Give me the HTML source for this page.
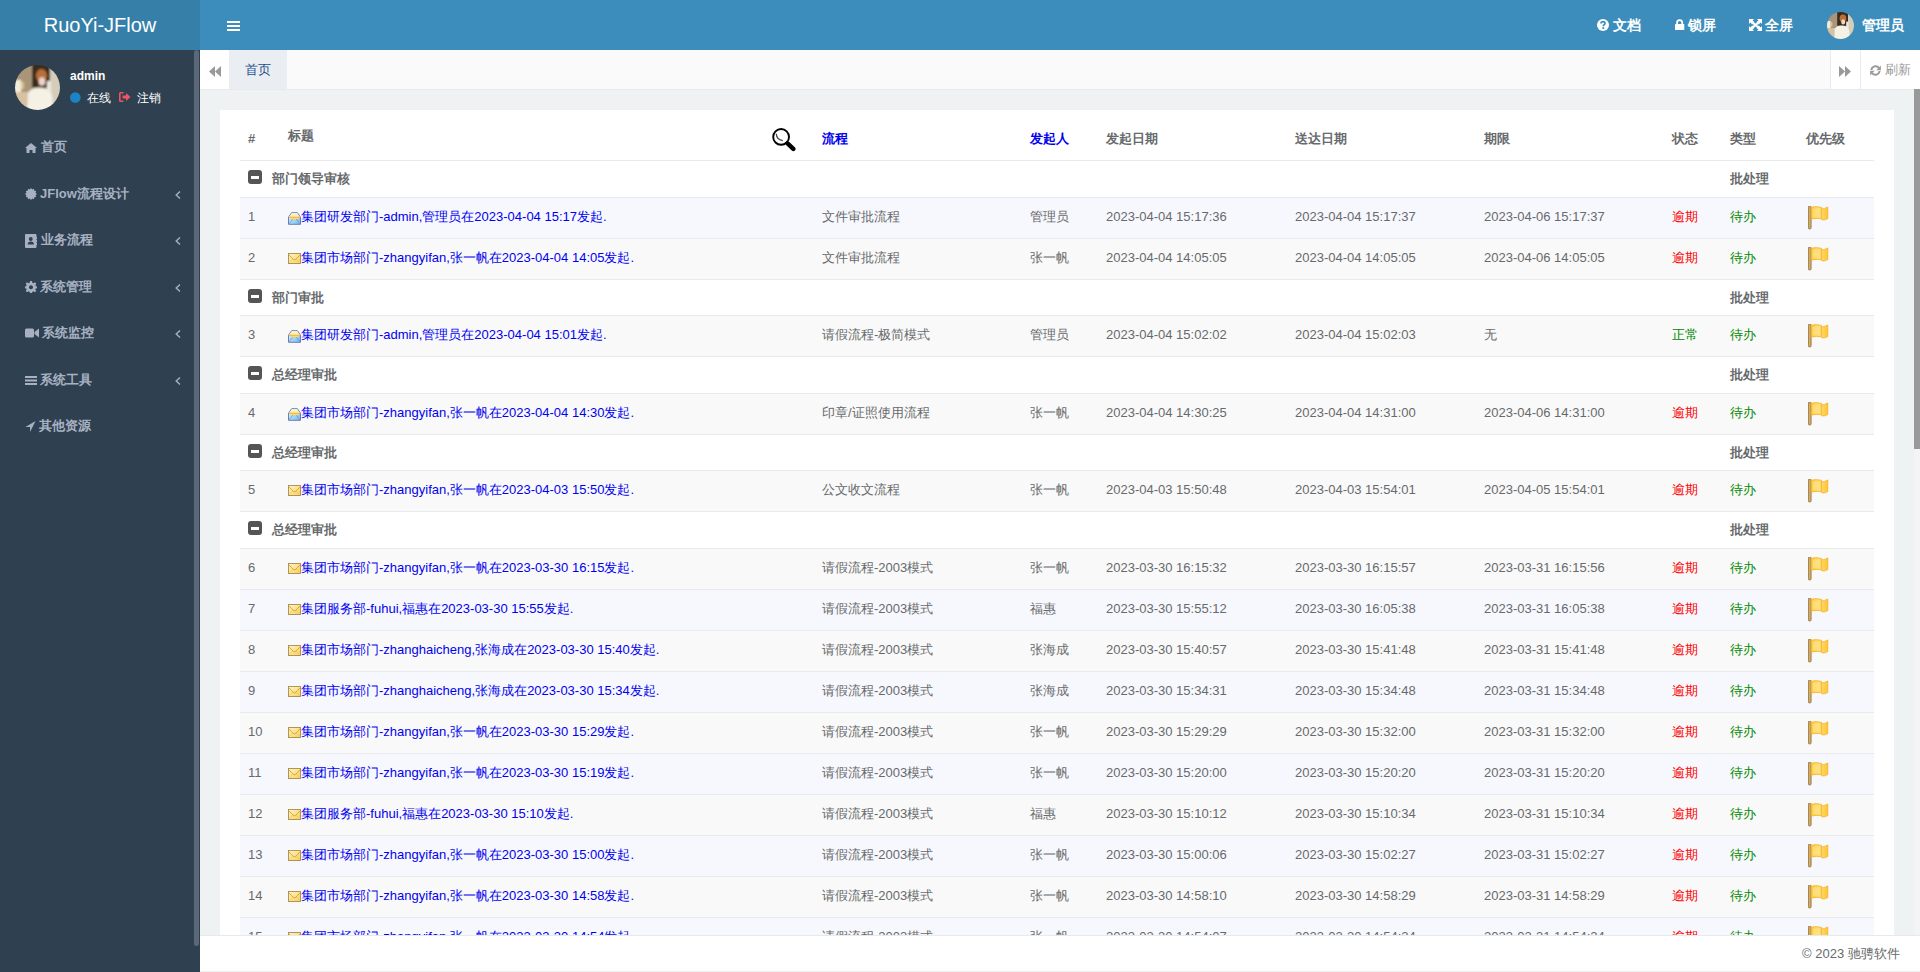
<!DOCTYPE html>
<html><head><meta charset="utf-8">
<style>
*{box-sizing:border-box;margin:0;padding:0}
html,body{width:1920px;height:972px;overflow:hidden;font-family:"Liberation Sans",sans-serif;font-size:13px;color:#676a6c;background:#fff}
.abs{position:absolute}
svg{display:block}
#logo{left:0;top:0;width:200px;height:50px;background:#367fa9;color:#fff;font-size:20px;line-height:50px;text-align:center}
#nav{left:200px;top:0;width:1720px;height:50px;background:#3c8dbc}
#side{left:0;top:50px;width:200px;height:922px;background:#2f4050}
#sbar{left:194px;top:50px;width:5px;height:896px;background:#5a6877;border-radius:3px}
#tabs{left:200px;top:50px;width:1720px;height:40px;background:#fafafa;border-bottom:1px solid #e7eaec}
#content{left:200px;top:90px;width:1714px;height:845px;background:#eef2f3}
#panel{left:220px;top:110px;width:1674px;height:825px;background:#fff;overflow:hidden}
#vthumb{left:1914px;top:89px;width:6px;height:360px;background:#999}
#vtrack{left:1914px;top:449px;width:6px;height:486px;background:#f4f4f4}
#footer{left:200px;top:935px;width:1720px;height:37px;background:#fff;border-top:1px solid #e7eaec;border-bottom:1px solid #eee}
.nv{position:absolute;color:#fff;font-weight:bold;font-size:14px;top:18px;line-height:14px;white-space:nowrap}
.menu{position:absolute;left:25px;color:#a7b1c2;font-weight:bold;font-size:13px;line-height:14px;white-space:nowrap}
.menu svg{position:absolute;left:0}
.menu span{position:absolute;white-space:nowrap}
.ang{position:absolute;left:175px}
/* table */
#tbl{position:absolute;left:20px;top:0;width:1634px;height:825px}
.th{position:absolute;font-weight:bold;color:#676a6c;white-space:nowrap;line-height:14px}
.th.blue{color:#0000f0}
.hl{position:absolute;left:0;width:1634px;height:1px;background:#e7eaec}
.row{position:absolute;left:0;width:1634px}
.row.grp{background:#fff}
.c{position:absolute;white-space:nowrap;line-height:14px;top:12px}
.num{left:8px}
.ttl{left:48px}
.ttl .env{position:absolute;left:0;top:2px}
.ttl a{position:absolute;left:13px;top:0;color:#0000f0;text-decoration:none;white-space:nowrap}
.flow{left:582px}
.who{left:790px}
.d1{left:866px}
.d2{left:1055px}
.d3{left:1244px}
.st{left:1432px}
.type{left:1490px}
.b{font-weight:bold;color:#676a6c}
.red{color:#f00}
.grn{color:#080}
.flag{position:absolute;left:1568px;top:8px}
.minus{position:absolute;left:8px;width:14px;height:14px;background:#555;border-radius:3px}
.minus:after{content:"";position:absolute;left:3px;top:5.5px;width:8px;height:3px;background:#fff}
.gname{position:absolute;left:32px;top:11px;font-weight:bold;line-height:14px;white-space:nowrap}
.grp .type{top:11px}
</style></head><body>
<div id="logo" class="abs">RuoYi-JFlow</div>
<div id="nav" class="abs"></div>
<!-- hamburger -->
<svg class="abs" style="left:227px;top:21px" width="13" height="10" viewBox="0 0 13 10"><rect x="0" y="0" width="13" height="2" fill="#fff"/><rect x="0" y="4" width="13" height="2" fill="#fff"/><rect x="0" y="8" width="13" height="2" fill="#fff"/></svg>
<!-- right nav -->
<svg class="abs" style="left:1597.4px;top:19px" width="12" height="12" viewBox="0 0 12 12"><circle cx="6" cy="6" r="6" fill="#fff"/><path d="M4 4.6 Q4 2.6 6 2.6 Q8 2.6 8 4.4 Q8 5.4 6.8 6 Q6.3 6.3 6.3 7.2" fill="none" stroke="#3c8dbc" stroke-width="1.7"/><rect x="5.3" y="8.2" width="1.9" height="1.7" fill="#3c8dbc"/></svg>
<div class="nv" style="left:1613px">文档</div>
<svg class="abs" style="left:1675px;top:19px" width="10" height="12" viewBox="0 0 10 12"><path d="M2.1 5.5 V3.6 A2.55 2.55 0 0 1 7.2 3.6 V5.5" fill="none" stroke="#fff" stroke-width="1.8"/><rect x="0" y="5" width="9.3" height="6" rx="0.5" fill="#fff"/></svg>
<div class="nv" style="left:1688px">锁屏</div>
<svg class="abs" style="left:1749px;top:19px" width="13" height="12" viewBox="0 0 13 12"><path d="M0 0 H5 L3.6 1.4 L5.4 3.2 L3.2 5.4 L1.4 3.6 L0 5 Z M13 0 V5 L11.6 3.6 L9.8 5.4 L7.6 3.2 L9.4 1.4 L8 0 Z M0 12 V7 L1.4 8.4 L3.2 6.6 L5.4 8.8 L3.6 10.6 L5 12 Z M13 12 H8 L9.4 10.6 L7.6 8.8 L9.8 6.6 L11.6 8.4 L13 7 Z" fill="#fff"/><path d="M2.5 2.5 L10.5 9.5 M10.5 2.5 L2.5 9.5" stroke="#fff" stroke-width="2.3"/></svg>
<div class="nv" style="left:1765px">全屏</div>
<svg class="abs" style="left:1827px;top:12px" width="27" height="27" viewBox="0 0 45 45"><defs><clipPath id="av2c"><circle cx="22.5" cy="22.5" r="22.5"/></clipPath><filter id="av2f" x="-20%" y="-20%" width="140%" height="140%"><feGaussianBlur stdDeviation="0.8"/></filter></defs><g clip-path="url(#av2c)"><g filter="url(#av2f)"><rect x="-3" y="-3" width="51" height="51" fill="#bcac93"/><rect x="-3" y="-3" width="20" height="30" fill="#a99579"/><rect x="-3" y="15" width="9" height="12" fill="#f3eddc"/><rect x="6" y="17" width="3" height="7" fill="#d9c48e"/><rect x="-3" y="27" width="22" height="21" fill="#d6c1a2"/><rect x="17" y="-3" width="18" height="26" fill="#3a2b1c"/><rect x="35" y="-3" width="13" height="51" fill="#d6ccba"/><rect x="32" y="16" width="4" height="11" fill="#ece8de"/><ellipse cx="26.5" cy="10.5" rx="5.5" ry="6.5" fill="#b8703a"/><ellipse cx="27" cy="16.5" rx="3.3" ry="4.3" fill="#efd6c8"/><path d="M12 48 L13 28 Q17 22 25 22.5 Q34 23 37 30 L38.5 48 Z" fill="#f5f1e5"/></g></g></svg>
<div class="nv" style="left:1862px">管理员</div>

<div id="side" class="abs"></div>
<div id="sbar" class="abs"></div>
<!-- user panel -->
<svg class="abs" style="left:15px;top:65px" width="45" height="45" viewBox="0 0 45 45"><defs><clipPath id="av1c"><circle cx="22.5" cy="22.5" r="22.5"/></clipPath><filter id="av1f" x="-20%" y="-20%" width="140%" height="140%"><feGaussianBlur stdDeviation="0.8"/></filter></defs><g clip-path="url(#av1c)"><g filter="url(#av1f)"><rect x="-3" y="-3" width="51" height="51" fill="#bcac93"/><rect x="-3" y="-3" width="20" height="30" fill="#a99579"/><rect x="-3" y="15" width="9" height="12" fill="#f3eddc"/><rect x="6" y="17" width="3" height="7" fill="#d9c48e"/><rect x="-3" y="27" width="22" height="21" fill="#d6c1a2"/><rect x="17" y="-3" width="18" height="26" fill="#3a2b1c"/><rect x="35" y="-3" width="13" height="51" fill="#d6ccba"/><rect x="32" y="16" width="4" height="11" fill="#ece8de"/><ellipse cx="26.5" cy="10.5" rx="5.5" ry="6.5" fill="#b8703a"/><ellipse cx="27" cy="16.5" rx="3.3" ry="4.3" fill="#efd6c8"/><path d="M12 48 L13 28 Q17 22 25 22.5 Q34 23 37 30 L38.5 48 Z" fill="#f5f1e5"/></g></g></svg>
<div class="abs" style="left:70px;top:70px;color:#fff;font-weight:bold;font-size:12px;line-height:12px">admin</div>
<svg class="abs" style="left:70px;top:92px" width="11" height="11" viewBox="0 0 11 11"><circle cx="5.3" cy="5.5" r="5.3" fill="#1c84c6"/></svg>
<div class="abs" style="left:87px;top:92px;color:#fff;font-size:12px;line-height:12px">在线</div>
<svg class="abs" style="left:119px;top:92px" width="12" height="10" viewBox="0 0 12 10"><path d="M4.5 0.8 H1.6 Q0.8 0.8 0.8 1.6 V8.4 Q0.8 9.2 1.6 9.2 H4.5" fill="none" stroke="#ed5565" stroke-width="1.6"/><path d="M3.5 3.5 H7 V1 L11.5 5 L7 9 V6.5 H3.5 Z" fill="#ed5565"/></svg>
<div class="abs" style="left:137px;top:92px;color:#fff;font-size:12px;line-height:12px">注销</div>

<!-- menu -->
<div class="menu" style="top:140px"><svg style="top:3px" width="12" height="10" viewBox="0 0 12 10"><path d="M6 0 L12 5 L10.5 5 L10.5 10 L7.5 10 L7.5 7 L4.5 7 L4.5 10 L1.5 10 L1.5 5 L0 5 Z" fill="#a7b1c2"/></svg><span style="left:16px">首页</span></div>
<div class="menu" style="top:187px"><svg style="top:1px" width="12" height="12" viewBox="0 0 12 12"><path d="M6.00 0.00 L7.22 1.46 L9.00 0.80 L9.32 2.68 L11.20 3.00 L10.54 4.78 L12.00 6.00 L10.54 7.22 L11.20 9.00 L9.32 9.32 L9.00 11.20 L7.22 10.54 L6.00 12.00 L4.78 10.54 L3.00 11.20 L2.68 9.32 L0.80 9.00 L1.46 7.22 L0.00 6.00 L1.46 4.78 L0.80 3.00 L2.68 2.68 L3.00 0.80 L4.78 1.46 Z" fill="#a7b1c2"/></svg><span style="left:15px">JFlow流程设计</span></div>
<div class="menu" style="top:233px"><svg style="top:0.5px" width="12" height="14" viewBox="0 0 12 14"><path d="M0 1 Q0 0 1 0 H10.5 Q11.5 0 11.5 1 V3 H12 V5 H11.5 V6 H12 V8 H11.5 V9 H12 V11 H11.5 V13 Q11.5 14 10.5 14 H1 Q0 14 0 13 Z" fill="#a7b1c2"/><circle cx="5.8" cy="5" r="1.9" fill="#2f4050"/><path d="M2.6 10.6 Q2.8 7.6 5.8 7.6 Q8.8 7.6 9 10.6 Z" fill="#2f4050"/></svg><span style="left:16px">业务流程</span></div>
<div class="menu" style="top:280px"><svg style="top:1px" width="12" height="12" viewBox="0 0 12 12"><path d="M5 0 H7 L7.3 1.7 L8.6 2.3 L10 1.3 L11.3 2.7 L10.3 4 L10.9 5.3 L12 5.5 V7.5 L10.9 7.3 L10.3 8.6 L11.3 10 L10 11.3 L8.6 10.3 L7.3 10.9 L7 12 H5 L4.7 10.9 L3.4 10.3 L2 11.3 L0.7 10 L1.7 8.6 L1.1 7.3 L0 7.5 V5.5 L1.1 5.3 L1.7 4 L0.7 2.7 L2 1.3 L3.4 2.3 L4.7 1.7 Z" fill="#a7b1c2"/><circle cx="6" cy="6.2" r="2" fill="#2f4050"/></svg><span style="left:15px">系统管理</span></div>
<div class="menu" style="top:326px"><svg style="top:2px" width="14" height="10" viewBox="0 0 14 10"><rect x="0" y="0.5" width="9" height="9" rx="1.5" fill="#a7b1c2"/><path d="M9.5 4 L14 0.5 V9.5 L9.5 6 Z" fill="#a7b1c2"/></svg><span style="left:17px">系统监控</span></div>
<div class="menu" style="top:373px"><svg style="top:3px" width="12" height="9" viewBox="0 0 12 9"><rect x="0" y="0" width="12" height="2" fill="#a7b1c2"/><rect x="0" y="3.5" width="12" height="2" fill="#a7b1c2"/><rect x="0" y="7" width="12" height="2" fill="#a7b1c2"/></svg><span style="left:15px">系统工具</span></div>
<div class="menu" style="top:419px"><svg style="top:2px" width="11" height="11" viewBox="0 0 11 12"><path d="M11 0 L5 12 L5 6.5 L0 6.5 Z" fill="#a7b1c2"/></svg><span style="left:14px">其他资源</span></div>
<svg class="ang" style="top:191px" width="6" height="8" viewBox="0 0 6 8"><path d="M5 0.5 L1.2 4 L5 7.5" fill="none" stroke="#a7b1c2" stroke-width="1.4"/></svg>
<svg class="ang" style="top:237px" width="6" height="8" viewBox="0 0 6 8"><path d="M5 0.5 L1.2 4 L5 7.5" fill="none" stroke="#a7b1c2" stroke-width="1.4"/></svg>
<svg class="ang" style="top:284px" width="6" height="8" viewBox="0 0 6 8"><path d="M5 0.5 L1.2 4 L5 7.5" fill="none" stroke="#a7b1c2" stroke-width="1.4"/></svg>
<svg class="ang" style="top:330px" width="6" height="8" viewBox="0 0 6 8"><path d="M5 0.5 L1.2 4 L5 7.5" fill="none" stroke="#a7b1c2" stroke-width="1.4"/></svg>
<svg class="ang" style="top:377px" width="6" height="8" viewBox="0 0 6 8"><path d="M5 0.5 L1.2 4 L5 7.5" fill="none" stroke="#a7b1c2" stroke-width="1.4"/></svg>

<!-- tabs -->
<div id="tabs" class="abs"></div>
<div class="abs" style="left:200px;top:50px;width:29px;height:39px;background:#fff"></div>
<svg class="abs" style="left:209px;top:66px" width="12" height="11" viewBox="0 0 12 11"><path d="M6 0 V11 L0 5.5 Z M12 0 V11 L6 5.5 Z" fill="#999"/></svg>
<div class="abs" style="left:229px;top:50px;width:58px;height:39px;background:#eaedf1"></div>
<div class="abs" style="left:245px;top:63px;color:#23508e;font-size:13px;line-height:14px">首页</div>
<div class="abs" style="left:1830px;top:50px;width:1px;height:39px;background:#e7eaec"></div>
<div class="abs" style="left:1831px;top:50px;width:89px;height:39px;background:#fff"></div>
<div class="abs" style="left:1860px;top:50px;width:1px;height:39px;background:#e7eaec"></div>
<svg class="abs" style="left:1839px;top:66px" width="12" height="11" viewBox="0 0 12 11"><path d="M0 0 V11 L6 5.5 Z M6 0 V11 L12 5.5 Z" fill="#999"/></svg>
<svg class="abs" style="left:1870px;top:65px" width="11" height="11" viewBox="0 0 11 11"><path d="M1.4 5 A4.2 4.2 0 0 1 8.9 2.9" fill="none" stroke="#999" stroke-width="1.9"/><path d="M10.9 0.6 V5.2 H6.3 Z" fill="#999"/><path d="M9.6 6 A4.2 4.2 0 0 1 2.1 8.1" fill="none" stroke="#999" stroke-width="1.9"/><path d="M0.1 10.4 V5.8 H4.7 Z" fill="#999"/></svg>
<div class="abs" style="left:1885px;top:63px;color:#999;font-size:12.5px;line-height:14px">刷新</div>

<div id="content" class="abs"></div>
<div id="panel" class="abs">
<div id="tbl">
<div class="th" style="left:8px;top:22px">#</div>
<div class="th" style="left:48px;top:19px">标题</div>
<svg class="abs" style="left:532px;top:18px" width="24" height="24" viewBox="0 0 24 24"><circle cx="9.1" cy="8.9" r="7.9" fill="#fff" stroke="#000" stroke-width="1.9"/><path d="M4.3 5.8 Q4.6 11.8 10.8 12.6" fill="none" stroke="#444" stroke-width="1.3"/><path d="M15.8 15.6 L21.3 20.9" stroke="#000" stroke-width="4.4" stroke-linecap="round"/><path d="M14 13.8 L16.5 16.3" stroke="#000" stroke-width="2.6"/></svg>
<div class="th blue" style="left:582px;top:22px">流程</div>
<div class="th blue" style="left:790px;top:22px">发起人</div>
<div class="th" style="left:866px;top:22px">发起日期</div>
<div class="th" style="left:1055px;top:22px">送达日期</div>
<div class="th" style="left:1244px;top:22px">期限</div>
<div class="th" style="left:1432px;top:22px">状态</div>
<div class="th" style="left:1490px;top:22px">类型</div>
<div class="th" style="left:1566px;top:22px">优先级</div>
<div class="hl" style="top:50px"></div>
<div style="position:absolute;left:0;top:-110px;width:1634px">
<div class="row grp" style="top:161px;height:36px"><span class="minus" style="top:9px"></span><span class="gname">部门领导审核</span><span class="c type b">批处理</span></div>
<div class="hl" style="top:197px"></div>
<div class="row" style="top:198px;height:40px;background:#f7f8fd"><span class="c num">1</span><span class="c ttl"><svg class="env" width="13" height="13" viewBox="0 0 13 13"><defs><linearGradient id="eb" x1="0" y1="0" x2="1" y2="1"><stop offset="0" stop-color="#e6fbff"/><stop offset="1" stop-color="#6fb8ec"/></linearGradient><linearGradient id="ey" x1="0" y1="0" x2="0" y2="1"><stop offset="0" stop-color="#fffbe0"/><stop offset="1" stop-color="#ffd656"/></linearGradient></defs><path d="M0.5 5.2 L3.6 0.7 H9.4 L12.5 5.2 V12.3 H0.5 Z" fill="url(#eb)" stroke="#5f6fb0" stroke-width="0.9"/><path d="M0.9 5.3 L3.9 1.2 H9.1 L12.1 5.3 L9.5 7.2 H3.5 Z" fill="url(#ey)"/><path d="M0.9 5.4 H12.1" stroke="#efb33c" stroke-width="0.9"/><path d="M1 11.8 L4.6 7.3 M12 11.8 L8.4 7.3" stroke="#6f82c2" stroke-width="0.7"/></svg><a>集团研发部门-admin,管理员在2023-04-04 15:17发起.</a></span><span class="c flow">文件审批流程</span><span class="c who">管理员</span><span class="c d1">2023-04-04 15:17:36</span><span class="c d2">2023-04-04 15:17:37</span><span class="c d3">2023-04-06 15:17:37</span><span class="c st red">逾期</span><span class="c type grn">待办</span><svg class="flag" width="21" height="24" viewBox="0 0 21 24"><defs><linearGradient id="fy" x1="0" y1="0" x2="1" y2="0"><stop offset="0" stop-color="#ffc93c"/><stop offset="0.5" stop-color="#ffde78"/><stop offset="1" stop-color="#ffc534"/></linearGradient></defs><rect x="0.4" y="0" width="2.7" height="23" rx="1.2" fill="#cdb066" stroke="#93683a" stroke-width="0.8"/><path d="M3.2 1.2 Q8 0 13.3 1.3 L13.9 3 Q17 2.6 19.8 0.9 L19.8 12.6 Q17 14.3 14 14 L13.4 12.7 Q8 12 3.2 13 Z" fill="url(#fy)" stroke="#f4ad1e" stroke-width="0.7"/><path d="M13.3 1.6 L13.4 12.7" stroke="#f3b12a" stroke-width="0.8"/><path d="M5 3 Q8.5 2.2 11.8 3 L11.8 11 Q8.5 10.6 5 11.3 Z" fill="#ffe286" opacity="0.7"/></svg></div>
<div class="hl" style="top:238px"></div>
<div class="row" style="top:239px;height:40px;background:#f9f9f9"><span class="c num">2</span><span class="c ttl"><svg class="env" width="13" height="11" viewBox="0 0 13 11"><defs><linearGradient id="ec" x1="0" y1="0" x2="1" y2="1"><stop offset="0" stop-color="#fff6c4"/><stop offset="1" stop-color="#f7cf5a"/></linearGradient></defs><rect x="0.5" y="0.5" width="12" height="10" fill="url(#ec)" stroke="#a88a4c" stroke-width="0.9"/><path d="M1.2 2 Q3.5 4.8 5.2 6.3 Q6.5 7.3 7.8 6.3 Q9.5 4.8 11.8 2" fill="none" stroke="#cf9c38" stroke-width="0.9"/><path d="M1.5 9.3 L4.5 6.3 M11.5 9.3 L8.5 6.3" stroke="#e8c060" stroke-width="0.6"/></svg><a>集团市场部门-zhangyifan,张一帆在2023-04-04 14:05发起.</a></span><span class="c flow">文件审批流程</span><span class="c who">张一帆</span><span class="c d1">2023-04-04 14:05:05</span><span class="c d2">2023-04-04 14:05:05</span><span class="c d3">2023-04-06 14:05:05</span><span class="c st red">逾期</span><span class="c type grn">待办</span><svg class="flag" width="21" height="24" viewBox="0 0 21 24"><defs><linearGradient id="fy" x1="0" y1="0" x2="1" y2="0"><stop offset="0" stop-color="#ffc93c"/><stop offset="0.5" stop-color="#ffde78"/><stop offset="1" stop-color="#ffc534"/></linearGradient></defs><rect x="0.4" y="0" width="2.7" height="23" rx="1.2" fill="#cdb066" stroke="#93683a" stroke-width="0.8"/><path d="M3.2 1.2 Q8 0 13.3 1.3 L13.9 3 Q17 2.6 19.8 0.9 L19.8 12.6 Q17 14.3 14 14 L13.4 12.7 Q8 12 3.2 13 Z" fill="url(#fy)" stroke="#f4ad1e" stroke-width="0.7"/><path d="M13.3 1.6 L13.4 12.7" stroke="#f3b12a" stroke-width="0.8"/><path d="M5 3 Q8.5 2.2 11.8 3 L11.8 11 Q8.5 10.6 5 11.3 Z" fill="#ffe286" opacity="0.7"/></svg></div>
<div class="hl" style="top:279px"></div>
<div class="row grp" style="top:280px;height:35px"><span class="minus" style="top:9px"></span><span class="gname">部门审批</span><span class="c type b">批处理</span></div>
<div class="hl" style="top:315px"></div>
<div class="row" style="top:316px;height:40px;background:#f9f9f9"><span class="c num">3</span><span class="c ttl"><svg class="env" width="13" height="13" viewBox="0 0 13 13"><defs><linearGradient id="eb" x1="0" y1="0" x2="1" y2="1"><stop offset="0" stop-color="#e6fbff"/><stop offset="1" stop-color="#6fb8ec"/></linearGradient><linearGradient id="ey" x1="0" y1="0" x2="0" y2="1"><stop offset="0" stop-color="#fffbe0"/><stop offset="1" stop-color="#ffd656"/></linearGradient></defs><path d="M0.5 5.2 L3.6 0.7 H9.4 L12.5 5.2 V12.3 H0.5 Z" fill="url(#eb)" stroke="#5f6fb0" stroke-width="0.9"/><path d="M0.9 5.3 L3.9 1.2 H9.1 L12.1 5.3 L9.5 7.2 H3.5 Z" fill="url(#ey)"/><path d="M0.9 5.4 H12.1" stroke="#efb33c" stroke-width="0.9"/><path d="M1 11.8 L4.6 7.3 M12 11.8 L8.4 7.3" stroke="#6f82c2" stroke-width="0.7"/></svg><a>集团研发部门-admin,管理员在2023-04-04 15:01发起.</a></span><span class="c flow">请假流程-极简模式</span><span class="c who">管理员</span><span class="c d1">2023-04-04 15:02:02</span><span class="c d2">2023-04-04 15:02:03</span><span class="c d3">无</span><span class="c st grn">正常</span><span class="c type grn">待办</span><svg class="flag" width="21" height="24" viewBox="0 0 21 24"><defs><linearGradient id="fy" x1="0" y1="0" x2="1" y2="0"><stop offset="0" stop-color="#ffc93c"/><stop offset="0.5" stop-color="#ffde78"/><stop offset="1" stop-color="#ffc534"/></linearGradient></defs><rect x="0.4" y="0" width="2.7" height="23" rx="1.2" fill="#cdb066" stroke="#93683a" stroke-width="0.8"/><path d="M3.2 1.2 Q8 0 13.3 1.3 L13.9 3 Q17 2.6 19.8 0.9 L19.8 12.6 Q17 14.3 14 14 L13.4 12.7 Q8 12 3.2 13 Z" fill="url(#fy)" stroke="#f4ad1e" stroke-width="0.7"/><path d="M13.3 1.6 L13.4 12.7" stroke="#f3b12a" stroke-width="0.8"/><path d="M5 3 Q8.5 2.2 11.8 3 L11.8 11 Q8.5 10.6 5 11.3 Z" fill="#ffe286" opacity="0.7"/></svg></div>
<div class="hl" style="top:356px"></div>
<div class="row grp" style="top:357px;height:36px"><span class="minus" style="top:9px"></span><span class="gname">总经理审批</span><span class="c type b">批处理</span></div>
<div class="hl" style="top:393px"></div>
<div class="row" style="top:394px;height:40px;background:#f9f9f9"><span class="c num">4</span><span class="c ttl"><svg class="env" width="13" height="13" viewBox="0 0 13 13"><defs><linearGradient id="eb" x1="0" y1="0" x2="1" y2="1"><stop offset="0" stop-color="#e6fbff"/><stop offset="1" stop-color="#6fb8ec"/></linearGradient><linearGradient id="ey" x1="0" y1="0" x2="0" y2="1"><stop offset="0" stop-color="#fffbe0"/><stop offset="1" stop-color="#ffd656"/></linearGradient></defs><path d="M0.5 5.2 L3.6 0.7 H9.4 L12.5 5.2 V12.3 H0.5 Z" fill="url(#eb)" stroke="#5f6fb0" stroke-width="0.9"/><path d="M0.9 5.3 L3.9 1.2 H9.1 L12.1 5.3 L9.5 7.2 H3.5 Z" fill="url(#ey)"/><path d="M0.9 5.4 H12.1" stroke="#efb33c" stroke-width="0.9"/><path d="M1 11.8 L4.6 7.3 M12 11.8 L8.4 7.3" stroke="#6f82c2" stroke-width="0.7"/></svg><a>集团市场部门-zhangyifan,张一帆在2023-04-04 14:30发起.</a></span><span class="c flow">印章/证照使用流程</span><span class="c who">张一帆</span><span class="c d1">2023-04-04 14:30:25</span><span class="c d2">2023-04-04 14:31:00</span><span class="c d3">2023-04-06 14:31:00</span><span class="c st red">逾期</span><span class="c type grn">待办</span><svg class="flag" width="21" height="24" viewBox="0 0 21 24"><defs><linearGradient id="fy" x1="0" y1="0" x2="1" y2="0"><stop offset="0" stop-color="#ffc93c"/><stop offset="0.5" stop-color="#ffde78"/><stop offset="1" stop-color="#ffc534"/></linearGradient></defs><rect x="0.4" y="0" width="2.7" height="23" rx="1.2" fill="#cdb066" stroke="#93683a" stroke-width="0.8"/><path d="M3.2 1.2 Q8 0 13.3 1.3 L13.9 3 Q17 2.6 19.8 0.9 L19.8 12.6 Q17 14.3 14 14 L13.4 12.7 Q8 12 3.2 13 Z" fill="url(#fy)" stroke="#f4ad1e" stroke-width="0.7"/><path d="M13.3 1.6 L13.4 12.7" stroke="#f3b12a" stroke-width="0.8"/><path d="M5 3 Q8.5 2.2 11.8 3 L11.8 11 Q8.5 10.6 5 11.3 Z" fill="#ffe286" opacity="0.7"/></svg></div>
<div class="hl" style="top:434px"></div>
<div class="row grp" style="top:435px;height:35px"><span class="minus" style="top:9px"></span><span class="gname">总经理审批</span><span class="c type b">批处理</span></div>
<div class="hl" style="top:470px"></div>
<div class="row" style="top:471px;height:40px;background:#f9f9f9"><span class="c num">5</span><span class="c ttl"><svg class="env" width="13" height="11" viewBox="0 0 13 11"><defs><linearGradient id="ec" x1="0" y1="0" x2="1" y2="1"><stop offset="0" stop-color="#fff6c4"/><stop offset="1" stop-color="#f7cf5a"/></linearGradient></defs><rect x="0.5" y="0.5" width="12" height="10" fill="url(#ec)" stroke="#a88a4c" stroke-width="0.9"/><path d="M1.2 2 Q3.5 4.8 5.2 6.3 Q6.5 7.3 7.8 6.3 Q9.5 4.8 11.8 2" fill="none" stroke="#cf9c38" stroke-width="0.9"/><path d="M1.5 9.3 L4.5 6.3 M11.5 9.3 L8.5 6.3" stroke="#e8c060" stroke-width="0.6"/></svg><a>集团市场部门-zhangyifan,张一帆在2023-04-03 15:50发起.</a></span><span class="c flow">公文收文流程</span><span class="c who">张一帆</span><span class="c d1">2023-04-03 15:50:48</span><span class="c d2">2023-04-03 15:54:01</span><span class="c d3">2023-04-05 15:54:01</span><span class="c st red">逾期</span><span class="c type grn">待办</span><svg class="flag" width="21" height="24" viewBox="0 0 21 24"><defs><linearGradient id="fy" x1="0" y1="0" x2="1" y2="0"><stop offset="0" stop-color="#ffc93c"/><stop offset="0.5" stop-color="#ffde78"/><stop offset="1" stop-color="#ffc534"/></linearGradient></defs><rect x="0.4" y="0" width="2.7" height="23" rx="1.2" fill="#cdb066" stroke="#93683a" stroke-width="0.8"/><path d="M3.2 1.2 Q8 0 13.3 1.3 L13.9 3 Q17 2.6 19.8 0.9 L19.8 12.6 Q17 14.3 14 14 L13.4 12.7 Q8 12 3.2 13 Z" fill="url(#fy)" stroke="#f4ad1e" stroke-width="0.7"/><path d="M13.3 1.6 L13.4 12.7" stroke="#f3b12a" stroke-width="0.8"/><path d="M5 3 Q8.5 2.2 11.8 3 L11.8 11 Q8.5 10.6 5 11.3 Z" fill="#ffe286" opacity="0.7"/></svg></div>
<div class="hl" style="top:511px"></div>
<div class="row grp" style="top:512px;height:36px"><span class="minus" style="top:9px"></span><span class="gname">总经理审批</span><span class="c type b">批处理</span></div>
<div class="hl" style="top:548px"></div>
<div class="row" style="top:549px;height:40px;background:#f9f9f9"><span class="c num">6</span><span class="c ttl"><svg class="env" width="13" height="11" viewBox="0 0 13 11"><defs><linearGradient id="ec" x1="0" y1="0" x2="1" y2="1"><stop offset="0" stop-color="#fff6c4"/><stop offset="1" stop-color="#f7cf5a"/></linearGradient></defs><rect x="0.5" y="0.5" width="12" height="10" fill="url(#ec)" stroke="#a88a4c" stroke-width="0.9"/><path d="M1.2 2 Q3.5 4.8 5.2 6.3 Q6.5 7.3 7.8 6.3 Q9.5 4.8 11.8 2" fill="none" stroke="#cf9c38" stroke-width="0.9"/><path d="M1.5 9.3 L4.5 6.3 M11.5 9.3 L8.5 6.3" stroke="#e8c060" stroke-width="0.6"/></svg><a>集团市场部门-zhangyifan,张一帆在2023-03-30 16:15发起.</a></span><span class="c flow">请假流程-2003模式</span><span class="c who">张一帆</span><span class="c d1">2023-03-30 16:15:32</span><span class="c d2">2023-03-30 16:15:57</span><span class="c d3">2023-03-31 16:15:56</span><span class="c st red">逾期</span><span class="c type grn">待办</span><svg class="flag" width="21" height="24" viewBox="0 0 21 24"><defs><linearGradient id="fy" x1="0" y1="0" x2="1" y2="0"><stop offset="0" stop-color="#ffc93c"/><stop offset="0.5" stop-color="#ffde78"/><stop offset="1" stop-color="#ffc534"/></linearGradient></defs><rect x="0.4" y="0" width="2.7" height="23" rx="1.2" fill="#cdb066" stroke="#93683a" stroke-width="0.8"/><path d="M3.2 1.2 Q8 0 13.3 1.3 L13.9 3 Q17 2.6 19.8 0.9 L19.8 12.6 Q17 14.3 14 14 L13.4 12.7 Q8 12 3.2 13 Z" fill="url(#fy)" stroke="#f4ad1e" stroke-width="0.7"/><path d="M13.3 1.6 L13.4 12.7" stroke="#f3b12a" stroke-width="0.8"/><path d="M5 3 Q8.5 2.2 11.8 3 L11.8 11 Q8.5 10.6 5 11.3 Z" fill="#ffe286" opacity="0.7"/></svg></div>
<div class="hl" style="top:589px"></div>
<div class="row" style="top:590px;height:40px;background:#f7f8fd"><span class="c num">7</span><span class="c ttl"><svg class="env" width="13" height="11" viewBox="0 0 13 11"><defs><linearGradient id="ec" x1="0" y1="0" x2="1" y2="1"><stop offset="0" stop-color="#fff6c4"/><stop offset="1" stop-color="#f7cf5a"/></linearGradient></defs><rect x="0.5" y="0.5" width="12" height="10" fill="url(#ec)" stroke="#a88a4c" stroke-width="0.9"/><path d="M1.2 2 Q3.5 4.8 5.2 6.3 Q6.5 7.3 7.8 6.3 Q9.5 4.8 11.8 2" fill="none" stroke="#cf9c38" stroke-width="0.9"/><path d="M1.5 9.3 L4.5 6.3 M11.5 9.3 L8.5 6.3" stroke="#e8c060" stroke-width="0.6"/></svg><a>集团服务部-fuhui,福惠在2023-03-30 15:55发起.</a></span><span class="c flow">请假流程-2003模式</span><span class="c who">福惠</span><span class="c d1">2023-03-30 15:55:12</span><span class="c d2">2023-03-30 16:05:38</span><span class="c d3">2023-03-31 16:05:38</span><span class="c st red">逾期</span><span class="c type grn">待办</span><svg class="flag" width="21" height="24" viewBox="0 0 21 24"><defs><linearGradient id="fy" x1="0" y1="0" x2="1" y2="0"><stop offset="0" stop-color="#ffc93c"/><stop offset="0.5" stop-color="#ffde78"/><stop offset="1" stop-color="#ffc534"/></linearGradient></defs><rect x="0.4" y="0" width="2.7" height="23" rx="1.2" fill="#cdb066" stroke="#93683a" stroke-width="0.8"/><path d="M3.2 1.2 Q8 0 13.3 1.3 L13.9 3 Q17 2.6 19.8 0.9 L19.8 12.6 Q17 14.3 14 14 L13.4 12.7 Q8 12 3.2 13 Z" fill="url(#fy)" stroke="#f4ad1e" stroke-width="0.7"/><path d="M13.3 1.6 L13.4 12.7" stroke="#f3b12a" stroke-width="0.8"/><path d="M5 3 Q8.5 2.2 11.8 3 L11.8 11 Q8.5 10.6 5 11.3 Z" fill="#ffe286" opacity="0.7"/></svg></div>
<div class="hl" style="top:630px"></div>
<div class="row" style="top:631px;height:40px;background:#f9f9f9"><span class="c num">8</span><span class="c ttl"><svg class="env" width="13" height="11" viewBox="0 0 13 11"><defs><linearGradient id="ec" x1="0" y1="0" x2="1" y2="1"><stop offset="0" stop-color="#fff6c4"/><stop offset="1" stop-color="#f7cf5a"/></linearGradient></defs><rect x="0.5" y="0.5" width="12" height="10" fill="url(#ec)" stroke="#a88a4c" stroke-width="0.9"/><path d="M1.2 2 Q3.5 4.8 5.2 6.3 Q6.5 7.3 7.8 6.3 Q9.5 4.8 11.8 2" fill="none" stroke="#cf9c38" stroke-width="0.9"/><path d="M1.5 9.3 L4.5 6.3 M11.5 9.3 L8.5 6.3" stroke="#e8c060" stroke-width="0.6"/></svg><a>集团市场部门-zhanghaicheng,张海成在2023-03-30 15:40发起.</a></span><span class="c flow">请假流程-2003模式</span><span class="c who">张海成</span><span class="c d1">2023-03-30 15:40:57</span><span class="c d2">2023-03-30 15:41:48</span><span class="c d3">2023-03-31 15:41:48</span><span class="c st red">逾期</span><span class="c type grn">待办</span><svg class="flag" width="21" height="24" viewBox="0 0 21 24"><defs><linearGradient id="fy" x1="0" y1="0" x2="1" y2="0"><stop offset="0" stop-color="#ffc93c"/><stop offset="0.5" stop-color="#ffde78"/><stop offset="1" stop-color="#ffc534"/></linearGradient></defs><rect x="0.4" y="0" width="2.7" height="23" rx="1.2" fill="#cdb066" stroke="#93683a" stroke-width="0.8"/><path d="M3.2 1.2 Q8 0 13.3 1.3 L13.9 3 Q17 2.6 19.8 0.9 L19.8 12.6 Q17 14.3 14 14 L13.4 12.7 Q8 12 3.2 13 Z" fill="url(#fy)" stroke="#f4ad1e" stroke-width="0.7"/><path d="M13.3 1.6 L13.4 12.7" stroke="#f3b12a" stroke-width="0.8"/><path d="M5 3 Q8.5 2.2 11.8 3 L11.8 11 Q8.5 10.6 5 11.3 Z" fill="#ffe286" opacity="0.7"/></svg></div>
<div class="hl" style="top:671px"></div>
<div class="row" style="top:672px;height:40px;background:#f7f8fd"><span class="c num">9</span><span class="c ttl"><svg class="env" width="13" height="11" viewBox="0 0 13 11"><defs><linearGradient id="ec" x1="0" y1="0" x2="1" y2="1"><stop offset="0" stop-color="#fff6c4"/><stop offset="1" stop-color="#f7cf5a"/></linearGradient></defs><rect x="0.5" y="0.5" width="12" height="10" fill="url(#ec)" stroke="#a88a4c" stroke-width="0.9"/><path d="M1.2 2 Q3.5 4.8 5.2 6.3 Q6.5 7.3 7.8 6.3 Q9.5 4.8 11.8 2" fill="none" stroke="#cf9c38" stroke-width="0.9"/><path d="M1.5 9.3 L4.5 6.3 M11.5 9.3 L8.5 6.3" stroke="#e8c060" stroke-width="0.6"/></svg><a>集团市场部门-zhanghaicheng,张海成在2023-03-30 15:34发起.</a></span><span class="c flow">请假流程-2003模式</span><span class="c who">张海成</span><span class="c d1">2023-03-30 15:34:31</span><span class="c d2">2023-03-30 15:34:48</span><span class="c d3">2023-03-31 15:34:48</span><span class="c st red">逾期</span><span class="c type grn">待办</span><svg class="flag" width="21" height="24" viewBox="0 0 21 24"><defs><linearGradient id="fy" x1="0" y1="0" x2="1" y2="0"><stop offset="0" stop-color="#ffc93c"/><stop offset="0.5" stop-color="#ffde78"/><stop offset="1" stop-color="#ffc534"/></linearGradient></defs><rect x="0.4" y="0" width="2.7" height="23" rx="1.2" fill="#cdb066" stroke="#93683a" stroke-width="0.8"/><path d="M3.2 1.2 Q8 0 13.3 1.3 L13.9 3 Q17 2.6 19.8 0.9 L19.8 12.6 Q17 14.3 14 14 L13.4 12.7 Q8 12 3.2 13 Z" fill="url(#fy)" stroke="#f4ad1e" stroke-width="0.7"/><path d="M13.3 1.6 L13.4 12.7" stroke="#f3b12a" stroke-width="0.8"/><path d="M5 3 Q8.5 2.2 11.8 3 L11.8 11 Q8.5 10.6 5 11.3 Z" fill="#ffe286" opacity="0.7"/></svg></div>
<div class="hl" style="top:712px"></div>
<div class="row" style="top:713px;height:40px;background:#f9f9f9"><span class="c num">10</span><span class="c ttl"><svg class="env" width="13" height="11" viewBox="0 0 13 11"><defs><linearGradient id="ec" x1="0" y1="0" x2="1" y2="1"><stop offset="0" stop-color="#fff6c4"/><stop offset="1" stop-color="#f7cf5a"/></linearGradient></defs><rect x="0.5" y="0.5" width="12" height="10" fill="url(#ec)" stroke="#a88a4c" stroke-width="0.9"/><path d="M1.2 2 Q3.5 4.8 5.2 6.3 Q6.5 7.3 7.8 6.3 Q9.5 4.8 11.8 2" fill="none" stroke="#cf9c38" stroke-width="0.9"/><path d="M1.5 9.3 L4.5 6.3 M11.5 9.3 L8.5 6.3" stroke="#e8c060" stroke-width="0.6"/></svg><a>集团市场部门-zhangyifan,张一帆在2023-03-30 15:29发起.</a></span><span class="c flow">请假流程-2003模式</span><span class="c who">张一帆</span><span class="c d1">2023-03-30 15:29:29</span><span class="c d2">2023-03-30 15:32:00</span><span class="c d3">2023-03-31 15:32:00</span><span class="c st red">逾期</span><span class="c type grn">待办</span><svg class="flag" width="21" height="24" viewBox="0 0 21 24"><defs><linearGradient id="fy" x1="0" y1="0" x2="1" y2="0"><stop offset="0" stop-color="#ffc93c"/><stop offset="0.5" stop-color="#ffde78"/><stop offset="1" stop-color="#ffc534"/></linearGradient></defs><rect x="0.4" y="0" width="2.7" height="23" rx="1.2" fill="#cdb066" stroke="#93683a" stroke-width="0.8"/><path d="M3.2 1.2 Q8 0 13.3 1.3 L13.9 3 Q17 2.6 19.8 0.9 L19.8 12.6 Q17 14.3 14 14 L13.4 12.7 Q8 12 3.2 13 Z" fill="url(#fy)" stroke="#f4ad1e" stroke-width="0.7"/><path d="M13.3 1.6 L13.4 12.7" stroke="#f3b12a" stroke-width="0.8"/><path d="M5 3 Q8.5 2.2 11.8 3 L11.8 11 Q8.5 10.6 5 11.3 Z" fill="#ffe286" opacity="0.7"/></svg></div>
<div class="hl" style="top:753px"></div>
<div class="row" style="top:754px;height:40px;background:#f7f8fd"><span class="c num">11</span><span class="c ttl"><svg class="env" width="13" height="11" viewBox="0 0 13 11"><defs><linearGradient id="ec" x1="0" y1="0" x2="1" y2="1"><stop offset="0" stop-color="#fff6c4"/><stop offset="1" stop-color="#f7cf5a"/></linearGradient></defs><rect x="0.5" y="0.5" width="12" height="10" fill="url(#ec)" stroke="#a88a4c" stroke-width="0.9"/><path d="M1.2 2 Q3.5 4.8 5.2 6.3 Q6.5 7.3 7.8 6.3 Q9.5 4.8 11.8 2" fill="none" stroke="#cf9c38" stroke-width="0.9"/><path d="M1.5 9.3 L4.5 6.3 M11.5 9.3 L8.5 6.3" stroke="#e8c060" stroke-width="0.6"/></svg><a>集团市场部门-zhangyifan,张一帆在2023-03-30 15:19发起.</a></span><span class="c flow">请假流程-2003模式</span><span class="c who">张一帆</span><span class="c d1">2023-03-30 15:20:00</span><span class="c d2">2023-03-30 15:20:20</span><span class="c d3">2023-03-31 15:20:20</span><span class="c st red">逾期</span><span class="c type grn">待办</span><svg class="flag" width="21" height="24" viewBox="0 0 21 24"><defs><linearGradient id="fy" x1="0" y1="0" x2="1" y2="0"><stop offset="0" stop-color="#ffc93c"/><stop offset="0.5" stop-color="#ffde78"/><stop offset="1" stop-color="#ffc534"/></linearGradient></defs><rect x="0.4" y="0" width="2.7" height="23" rx="1.2" fill="#cdb066" stroke="#93683a" stroke-width="0.8"/><path d="M3.2 1.2 Q8 0 13.3 1.3 L13.9 3 Q17 2.6 19.8 0.9 L19.8 12.6 Q17 14.3 14 14 L13.4 12.7 Q8 12 3.2 13 Z" fill="url(#fy)" stroke="#f4ad1e" stroke-width="0.7"/><path d="M13.3 1.6 L13.4 12.7" stroke="#f3b12a" stroke-width="0.8"/><path d="M5 3 Q8.5 2.2 11.8 3 L11.8 11 Q8.5 10.6 5 11.3 Z" fill="#ffe286" opacity="0.7"/></svg></div>
<div class="hl" style="top:794px"></div>
<div class="row" style="top:795px;height:40px;background:#f9f9f9"><span class="c num">12</span><span class="c ttl"><svg class="env" width="13" height="11" viewBox="0 0 13 11"><defs><linearGradient id="ec" x1="0" y1="0" x2="1" y2="1"><stop offset="0" stop-color="#fff6c4"/><stop offset="1" stop-color="#f7cf5a"/></linearGradient></defs><rect x="0.5" y="0.5" width="12" height="10" fill="url(#ec)" stroke="#a88a4c" stroke-width="0.9"/><path d="M1.2 2 Q3.5 4.8 5.2 6.3 Q6.5 7.3 7.8 6.3 Q9.5 4.8 11.8 2" fill="none" stroke="#cf9c38" stroke-width="0.9"/><path d="M1.5 9.3 L4.5 6.3 M11.5 9.3 L8.5 6.3" stroke="#e8c060" stroke-width="0.6"/></svg><a>集团服务部-fuhui,福惠在2023-03-30 15:10发起.</a></span><span class="c flow">请假流程-2003模式</span><span class="c who">福惠</span><span class="c d1">2023-03-30 15:10:12</span><span class="c d2">2023-03-30 15:10:34</span><span class="c d3">2023-03-31 15:10:34</span><span class="c st red">逾期</span><span class="c type grn">待办</span><svg class="flag" width="21" height="24" viewBox="0 0 21 24"><defs><linearGradient id="fy" x1="0" y1="0" x2="1" y2="0"><stop offset="0" stop-color="#ffc93c"/><stop offset="0.5" stop-color="#ffde78"/><stop offset="1" stop-color="#ffc534"/></linearGradient></defs><rect x="0.4" y="0" width="2.7" height="23" rx="1.2" fill="#cdb066" stroke="#93683a" stroke-width="0.8"/><path d="M3.2 1.2 Q8 0 13.3 1.3 L13.9 3 Q17 2.6 19.8 0.9 L19.8 12.6 Q17 14.3 14 14 L13.4 12.7 Q8 12 3.2 13 Z" fill="url(#fy)" stroke="#f4ad1e" stroke-width="0.7"/><path d="M13.3 1.6 L13.4 12.7" stroke="#f3b12a" stroke-width="0.8"/><path d="M5 3 Q8.5 2.2 11.8 3 L11.8 11 Q8.5 10.6 5 11.3 Z" fill="#ffe286" opacity="0.7"/></svg></div>
<div class="hl" style="top:835px"></div>
<div class="row" style="top:836px;height:40px;background:#f7f8fd"><span class="c num">13</span><span class="c ttl"><svg class="env" width="13" height="11" viewBox="0 0 13 11"><defs><linearGradient id="ec" x1="0" y1="0" x2="1" y2="1"><stop offset="0" stop-color="#fff6c4"/><stop offset="1" stop-color="#f7cf5a"/></linearGradient></defs><rect x="0.5" y="0.5" width="12" height="10" fill="url(#ec)" stroke="#a88a4c" stroke-width="0.9"/><path d="M1.2 2 Q3.5 4.8 5.2 6.3 Q6.5 7.3 7.8 6.3 Q9.5 4.8 11.8 2" fill="none" stroke="#cf9c38" stroke-width="0.9"/><path d="M1.5 9.3 L4.5 6.3 M11.5 9.3 L8.5 6.3" stroke="#e8c060" stroke-width="0.6"/></svg><a>集团市场部门-zhangyifan,张一帆在2023-03-30 15:00发起.</a></span><span class="c flow">请假流程-2003模式</span><span class="c who">张一帆</span><span class="c d1">2023-03-30 15:00:06</span><span class="c d2">2023-03-30 15:02:27</span><span class="c d3">2023-03-31 15:02:27</span><span class="c st red">逾期</span><span class="c type grn">待办</span><svg class="flag" width="21" height="24" viewBox="0 0 21 24"><defs><linearGradient id="fy" x1="0" y1="0" x2="1" y2="0"><stop offset="0" stop-color="#ffc93c"/><stop offset="0.5" stop-color="#ffde78"/><stop offset="1" stop-color="#ffc534"/></linearGradient></defs><rect x="0.4" y="0" width="2.7" height="23" rx="1.2" fill="#cdb066" stroke="#93683a" stroke-width="0.8"/><path d="M3.2 1.2 Q8 0 13.3 1.3 L13.9 3 Q17 2.6 19.8 0.9 L19.8 12.6 Q17 14.3 14 14 L13.4 12.7 Q8 12 3.2 13 Z" fill="url(#fy)" stroke="#f4ad1e" stroke-width="0.7"/><path d="M13.3 1.6 L13.4 12.7" stroke="#f3b12a" stroke-width="0.8"/><path d="M5 3 Q8.5 2.2 11.8 3 L11.8 11 Q8.5 10.6 5 11.3 Z" fill="#ffe286" opacity="0.7"/></svg></div>
<div class="hl" style="top:876px"></div>
<div class="row" style="top:877px;height:40px;background:#f9f9f9"><span class="c num">14</span><span class="c ttl"><svg class="env" width="13" height="11" viewBox="0 0 13 11"><defs><linearGradient id="ec" x1="0" y1="0" x2="1" y2="1"><stop offset="0" stop-color="#fff6c4"/><stop offset="1" stop-color="#f7cf5a"/></linearGradient></defs><rect x="0.5" y="0.5" width="12" height="10" fill="url(#ec)" stroke="#a88a4c" stroke-width="0.9"/><path d="M1.2 2 Q3.5 4.8 5.2 6.3 Q6.5 7.3 7.8 6.3 Q9.5 4.8 11.8 2" fill="none" stroke="#cf9c38" stroke-width="0.9"/><path d="M1.5 9.3 L4.5 6.3 M11.5 9.3 L8.5 6.3" stroke="#e8c060" stroke-width="0.6"/></svg><a>集团市场部门-zhangyifan,张一帆在2023-03-30 14:58发起.</a></span><span class="c flow">请假流程-2003模式</span><span class="c who">张一帆</span><span class="c d1">2023-03-30 14:58:10</span><span class="c d2">2023-03-30 14:58:29</span><span class="c d3">2023-03-31 14:58:29</span><span class="c st red">逾期</span><span class="c type grn">待办</span><svg class="flag" width="21" height="24" viewBox="0 0 21 24"><defs><linearGradient id="fy" x1="0" y1="0" x2="1" y2="0"><stop offset="0" stop-color="#ffc93c"/><stop offset="0.5" stop-color="#ffde78"/><stop offset="1" stop-color="#ffc534"/></linearGradient></defs><rect x="0.4" y="0" width="2.7" height="23" rx="1.2" fill="#cdb066" stroke="#93683a" stroke-width="0.8"/><path d="M3.2 1.2 Q8 0 13.3 1.3 L13.9 3 Q17 2.6 19.8 0.9 L19.8 12.6 Q17 14.3 14 14 L13.4 12.7 Q8 12 3.2 13 Z" fill="url(#fy)" stroke="#f4ad1e" stroke-width="0.7"/><path d="M13.3 1.6 L13.4 12.7" stroke="#f3b12a" stroke-width="0.8"/><path d="M5 3 Q8.5 2.2 11.8 3 L11.8 11 Q8.5 10.6 5 11.3 Z" fill="#ffe286" opacity="0.7"/></svg></div>
<div class="hl" style="top:917px"></div>
<div class="row" style="top:918px;height:40px;background:#f7f8fd"><span class="c num">15</span><span class="c ttl"><svg class="env" width="13" height="11" viewBox="0 0 13 11"><defs><linearGradient id="ec" x1="0" y1="0" x2="1" y2="1"><stop offset="0" stop-color="#fff6c4"/><stop offset="1" stop-color="#f7cf5a"/></linearGradient></defs><rect x="0.5" y="0.5" width="12" height="10" fill="url(#ec)" stroke="#a88a4c" stroke-width="0.9"/><path d="M1.2 2 Q3.5 4.8 5.2 6.3 Q6.5 7.3 7.8 6.3 Q9.5 4.8 11.8 2" fill="none" stroke="#cf9c38" stroke-width="0.9"/><path d="M1.5 9.3 L4.5 6.3 M11.5 9.3 L8.5 6.3" stroke="#e8c060" stroke-width="0.6"/></svg><a>集团市场部门-zhangyifan,张一帆在2023-03-30 14:54发起.</a></span><span class="c flow">请假流程-2003模式</span><span class="c who">张一帆</span><span class="c d1">2023-03-30 14:54:07</span><span class="c d2">2023-03-30 14:54:24</span><span class="c d3">2023-03-31 14:54:24</span><span class="c st red">逾期</span><span class="c type grn">待办</span><svg class="flag" width="21" height="24" viewBox="0 0 21 24"><defs><linearGradient id="fy" x1="0" y1="0" x2="1" y2="0"><stop offset="0" stop-color="#ffc93c"/><stop offset="0.5" stop-color="#ffde78"/><stop offset="1" stop-color="#ffc534"/></linearGradient></defs><rect x="0.4" y="0" width="2.7" height="23" rx="1.2" fill="#cdb066" stroke="#93683a" stroke-width="0.8"/><path d="M3.2 1.2 Q8 0 13.3 1.3 L13.9 3 Q17 2.6 19.8 0.9 L19.8 12.6 Q17 14.3 14 14 L13.4 12.7 Q8 12 3.2 13 Z" fill="url(#fy)" stroke="#f4ad1e" stroke-width="0.7"/><path d="M13.3 1.6 L13.4 12.7" stroke="#f3b12a" stroke-width="0.8"/><path d="M5 3 Q8.5 2.2 11.8 3 L11.8 11 Q8.5 10.6 5 11.3 Z" fill="#ffe286" opacity="0.7"/></svg></div>
<div class="hl" style="top:958px"></div>
</div>
</div>
</div>
<div id="vthumb" class="abs"></div>
<div id="vtrack" class="abs"></div>
<div id="footer" class="abs"></div>
<div class="abs" style="left:1802px;top:947px;color:#676a6c;font-size:13px;line-height:14px">© 2023 驰骋软件</div>
</body></html>
